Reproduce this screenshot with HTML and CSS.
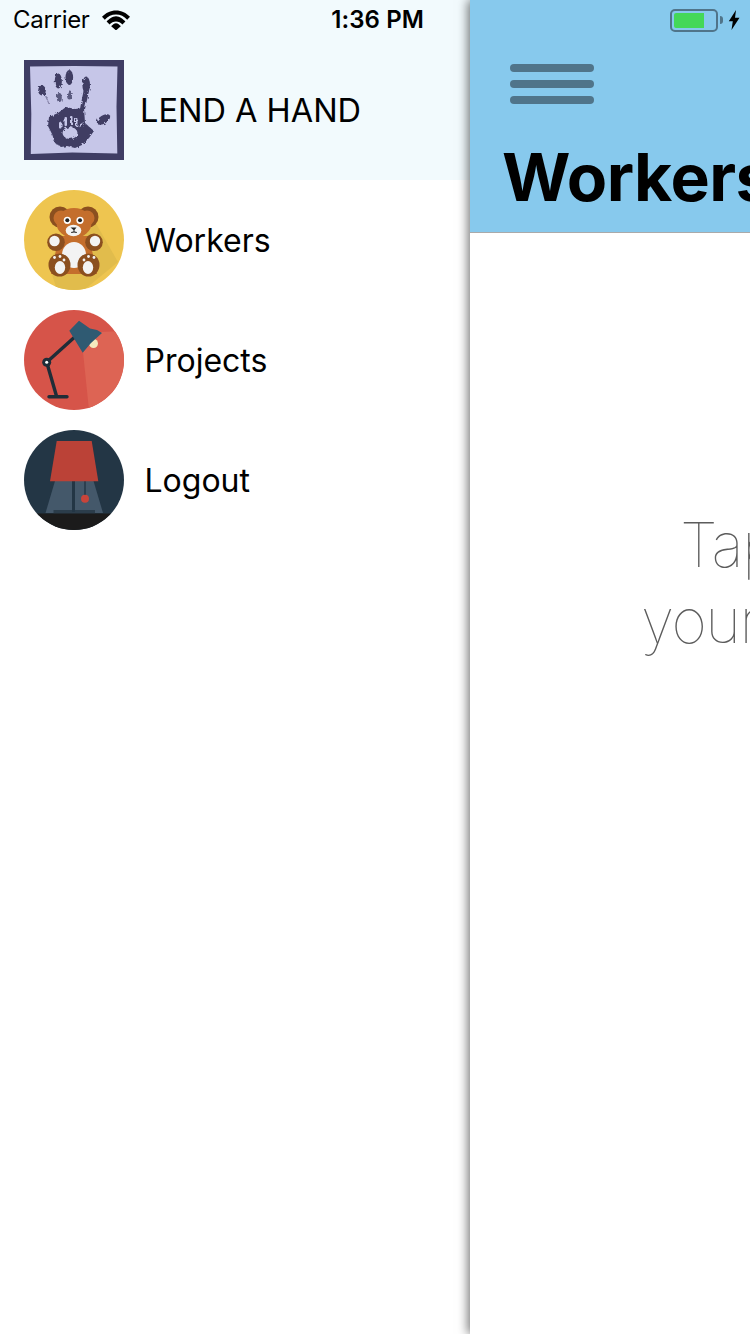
FILE: index.html
```html
<!DOCTYPE html>
<html lang="en">
<head>
<meta charset="utf-8">
<title>Lend a Hand</title>
<link rel="stylesheet" href="styles.css">
</head>
<body>
<div class="app">
  <aside class="drawer">
    <header class="drawer-head">
      <div class="status status-left">
        <span class="carrier">Carrier</span>
        <svg class="wifi" viewBox="0 0 28 20" aria-hidden="true">
          <path d="M0 6.800C3.700 2.800 8.600.4 14 .4s10.300 2.400 14 6.400l-2.800 3C22.200 6.500 18.300 4.600 14 4.600S5.800 6.500 2.800 9.800z"/>
          <path d="M4.600 11.600C7 9.100 10.300 6.300 14 6.300s7 2.800 9.400 5.300l-3 3C18.700 12.700 16.500 11.500 14 11.500s-4.700 1.200-6.400 3.100z"/>
          <path d="M9.200 16.200c1.200-1.300 2.900-2.900 4.800-2.900s3.600 1.600 4.800 2.900L14 20.400z"/>
        </svg>
        <span class="time">1:36 PM</span>
      </div>
      <div class="brand">
        <svg class="logo" viewBox="0 0 100 100" aria-hidden="true">
          <defs>
            <filter id="smudge" x="-10%" y="-10%" width="120%" height="120%">
              <feTurbulence type="fractalNoise" baseFrequency="0.35" numOctaves="2" seed="4"/>
              <feDisplacementMap in="SourceGraphic" scale="3.500"/>
            </filter>
          </defs>
          <rect width="100" height="100" fill="#3f3d64"/>
          <path d="M6 6.500 50 6l43.500.5-1 40 .8 47-45-1-41.500 1.500 .5-40z" fill="#c6c6e8"/>
          <g filter="url(#smudge)">
            <g fill="#3f3d64">
              <ellipse cx="18" cy="30.500" rx="3.800" ry="5"/>
              <ellipse cx="34.300" cy="21" rx="3.600" ry="7.500"/>
              <ellipse cx="35.300" cy="37.500" rx="2.500" ry="4.500" opacity=".8"/>
              <ellipse cx="45.300" cy="17.500" rx="3.800" ry="7.500"/>
              <ellipse cx="45.500" cy="35" rx="2.500" ry="4.500" opacity=".8"/>
              <ellipse cx="62.200" cy="25" rx="3.800" ry="8.500"/>
              <path d="M59.500 31h5.500l-4 18h-5z"/>
              <path d="M21 36l1.500 0 3 8-1 0z" opacity=".5"/>
              <ellipse cx="79.500" cy="59.500" rx="7.500" ry="4" transform="rotate(-32 79.500 59.500)"/>
              <path d="M25 57l9-4 8-6 9 2 9-1 1 15 9 8-5 7-7 7-7 3-8-2-6 1-6-4-3-9-4-8z"/>
            </g>
            <g fill="#c6c6e8">
              <rect x="35" y="62" width="2.500" height="6.500" rx="1"/>
              <rect x="40.500" y="57" width="2.500" height="9" rx="1"/>
              <rect x="46" y="56" width="2.500" height="9" rx="1"/>
              <rect x="51" y="58" width="2.500" height="8" rx="1"/>
              <ellipse cx="46" cy="73" rx="7.500" ry="6"/>
              <rect x="54.500" y="64" width="6" height="2" transform="rotate(-35 57 65)"/>
            </g>
          </g>
        </svg>
        <span class="brand-name">LEND A HAND</span>
      </div>
    </header>
    <nav class="menu">
      <a class="menu-item">
        <svg class="avatar" viewBox="0 0 100 100" aria-hidden="true">
          <defs><clipPath id="clip-bear"><circle cx="50" cy="50" r="50"/></clipPath></defs>
          <g clip-path="url(#clip-bear)">
            <rect width="100" height="100" fill="#eec550"/>
            <path d="M62 16 94 72 60 100H33L24 72z" fill="#e1bc4c"/>
            <circle cx="36" cy="27" r="10.500" fill="#8b4f1f"/>
            <circle cx="64" cy="27" r="10.500" fill="#8b4f1f"/>
            <circle cx="37" cy="28" r="7.500" fill="#c46e2c"/>
            <circle cx="63" cy="28" r="7.500" fill="#c46e2c"/>
            <path d="M35 46h30l8 38H27z" fill="#c46e2c"/>
            <ellipse cx="50" cy="33" rx="17.500" ry="15" fill="#c46e2c"/>
            <circle cx="43.300" cy="30.300" r="3.600" fill="#fff"/>
            <circle cx="56" cy="30.300" r="3.600" fill="#fff"/>
            <circle cx="43.300" cy="30.300" r="2" fill="#222"/>
            <circle cx="56" cy="30.300" r="2" fill="#222"/>
            <ellipse cx="49.500" cy="40.500" rx="7.800" ry="5.800" fill="#f3f3f3"/>
            <path d="M46.500 37.500h6l-2 2.500v1.500l2.500.6-.4 1-2.600-.7-2.600.7-.4-1 2.500-.6V40z" fill="#222"/>
            <ellipse cx="50" cy="65" rx="12" ry="13" fill="#f3f3f3"/>
            <circle cx="32" cy="52.300" r="8.800" fill="#8b4f1f"/>
            <circle cx="70" cy="52.300" r="8.800" fill="#8b4f1f"/>
            <circle cx="30.500" cy="51" r="5.200" fill="#f3f3f3"/>
            <circle cx="71" cy="51" r="5.200" fill="#f3f3f3"/>
            <ellipse cx="35.500" cy="75" rx="11" ry="11.500" fill="#8b4f1f"/>
            <ellipse cx="64.500" cy="75" rx="11" ry="11.500" fill="#8b4f1f"/>
            <ellipse cx="36" cy="77.500" rx="5.200" ry="6.500" fill="#f3f3f3"/>
            <ellipse cx="64" cy="77.500" rx="5.200" ry="6.500" fill="#f3f3f3"/>
            <g fill="#f3f3f3">
              <circle cx="30.500" cy="67.500" r="1.400"/><circle cx="36" cy="66.500" r="1.400"/><circle cx="40" cy="70" r="1.400"/>
              <circle cx="60" cy="70" r="1.400"/><circle cx="64.500" cy="66.500" r="1.400"/><circle cx="70" cy="67.500" r="1.400"/>
            </g>
          </g>
        </svg>
        <span class="menu-label">Workers</span>
      </a>
      <a class="menu-item">
        <svg class="avatar" viewBox="0 0 100 100" aria-hidden="true">
          <defs><clipPath id="clip-desk"><circle cx="50" cy="50" r="50"/></clipPath></defs>
          <g clip-path="url(#clip-desk)">
            <rect width="100" height="100" fill="#d65449"/>
            <path d="M59 42 76 22 100 21V100H65z" fill="#dd6454"/>
            <circle cx="69.500" cy="33.500" r="4.500" fill="#f5ebbf"/>
            <path d="M22.700 52.300 51 26.700M22.700 52.300 32.700 86.700" fill="none" stroke="#1f2d38" stroke-width="3.400"/>
            <path d="M25 86.700H43" fill="none" stroke="#1f2d38" stroke-width="3.400" stroke-linecap="round"/>
            <circle cx="22.700" cy="52.300" r="4.500" fill="#1f2d38"/>
            <circle cx="22.700" cy="52.300" r="1.500" fill="#fff"/>
            <path d="M55 10.700 45.300 20.700 58.700 42.700 67 33 78 23 73 20 66 18.500z" fill="#2f5a72"/>
          </g>
        </svg>
        <span class="menu-label">Projects</span>
      </a>
      <a class="menu-item">
        <svg class="avatar" viewBox="0 0 100 100" aria-hidden="true">
          <defs><clipPath id="clip-lamp"><circle cx="50" cy="50" r="50"/></clipPath></defs>
          <g clip-path="url(#clip-lamp)">
            <rect width="100" height="100" fill="#233645"/>
            <path d="M31 51h38.500l9.500 32H21.500z" fill="#44586a"/>
            <rect x="29.500" y="80" width="41.500" height="4" fill="#2b3d4b"/>
            <rect x="48" y="51" width="3" height="31" fill="#233645"/>
            <rect x="60.300" y="51" width="1.400" height="15" fill="#233645"/>
            <circle cx="61" cy="68.700" r="4" fill="#c9443a"/>
            <path d="M32.700 11H67.700L74.300 51.300H26z" fill="#bb4237"/>
            <rect y="83.500" width="100" height="17" fill="#1b1b1b"/>
          </g>
        </svg>
        <span class="menu-label">Logout</span>
      </a>
    </nav>
  </aside>
  <main class="panel">
    <header class="panel-head">
      <div class="status status-right">
        <span class="battery"><span class="battery-fill"></span></span>
        <span class="battery-tip"></span>
        <svg class="bolt" viewBox="0 0 12 20" aria-hidden="true"><path d="M8 0 .8 11.200h4L3.500 20 11.500 7.800H7z"/></svg>
      </div>
      <button class="burger" aria-label="Menu"><span></span><span></span><span></span></button>
      <h1 class="title">Workers</h1>
    </header>
    <p class="hint"><span class="hint-first">Tap</span><span class="hint-second">your</span></p>
  </main>
</div>
</body>
</html>
```

FILE: styles.css
```css
* { box-sizing: border-box; }
html, body { margin: 0; padding: 0; }
body {
  width: 750px;
  height: 1334px;
  overflow: hidden;
  background: #fff;
  color: #000;
  font-family: Inter, "Liberation Sans", sans-serif;
}
.app { display: flex; width: 750px; height: 1334px; overflow: hidden; }

.drawer { flex: 0 0 470px; display: flex; flex-direction: column; }
.drawer-head { height: 180px; background: #f2fafd; }
.status { height: 40px; display: flex; align-items: center; }
.status-left { padding: 0 46px 0 13px; }
.carrier { font-size: 24px; line-height: 40px; letter-spacing: -0.3px; }
.wifi { width: 28px; height: 20px; margin-left: 12px; }
.time { margin-left: auto; font-size: 24px; font-weight: 600; line-height: 40px; letter-spacing: 0.1px; }
.brand { display: flex; align-items: center; padding: 20px 0 0 24px; }
.logo { width: 100px; height: 100px; flex: none; }
.brand-name { margin-left: 16px; font-size: 32.500px; }

.menu { display: flex; flex-direction: column; }
.menu-item { height: 120px; display: flex; align-items: center; padding-left: 24px; }
.avatar { width: 100px; height: 100px; flex: none; }
.menu-label { margin-left: 20.500px; font-size: 32px; }

.panel {
  flex: 0 0 750px;
  position: relative;
  background: #fff;
  box-shadow: -2px 0 10px rgba(0, 0, 0, 0.55);
}
.panel-head { height: 233px; background: #87c9ed; border-bottom: 1px solid #aaa; }
.status-right { padding-left: 200px; }
.battery {
  width: 48px;
  height: 23px;
  border: 2px solid #50748a;
  border-radius: 5px;
  padding: 2px;
  display: flex;
}
.battery-fill { width: 30px; background: #44d858; border-radius: 2px 0 0 2px; }
.battery-tip { width: 3px; height: 8px; margin-left: 2px; background: #50748a; border-radius: 0 3px 3px 0; }
.bolt { width: 12px; height: 20px; margin-left: 5px; }
.burger {
  display: flex;
  flex-direction: column;
  gap: 8px;
  width: 84px;
  margin: 24px 0 0 40px;
  padding: 0;
  border: 0;
  background: none;
}
.burger span { display: block; height: 8px; border-radius: 4px; background: #50748a; }
.title {
  margin: 33px 0 0 32px;
  font-size: 66px;
  font-weight: 700;
  line-height: 80px;
  letter-spacing: -0.5px;
  white-space: nowrap;
}
.hint {
  margin: 274px 0 0;
  padding-left: 171px;
  font-size: 61px;
  font-weight: 100;
  line-height: 76px;
  letter-spacing: -1.500px;
  color: #5c5c5c;
  white-space: nowrap;
}
.hint-first, .hint-second { display: block; }
.hint-first { margin-left: 39px; }
```
